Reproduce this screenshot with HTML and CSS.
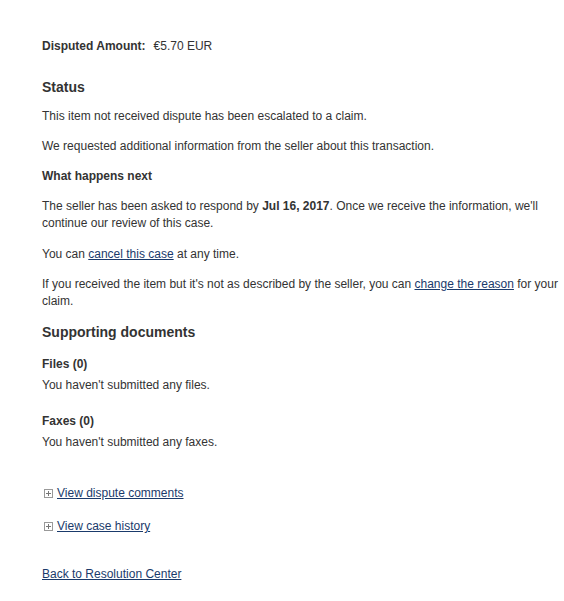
FILE: index.html
```html
<!DOCTYPE html>
<html lang="en">
<head>
    <meta charset="UTF-8">
    <meta name="viewport" content="width=device-width, initial-scale=1.0">
    <title>Case Details</title>
    <link rel="stylesheet" href="styles.css">
</head>
<body>
    <div class="case">
        <div class="amount">
            <span class="amount-label">Disputed Amount:</span>
            <span class="amount-value">&euro;5.70 EUR</span>
        </div>

        <section class="status">
            <h2>Status</h2>
            <p>This item not received dispute has been escalated to a claim.</p>
            <p>We requested additional information from the seller about this transaction.</p>
            <h3>What happens next</h3>
            <p class="respond">The seller has been asked to respond by <strong>Jul 16, 2017</strong>. Once we receive the information, we'll continue our review of this case.</p>
            <p>You can <a href="#">cancel this case</a> at any time.</p>
            <p>If you received the item but it's not as described by the seller, you can <a href="#">change the reason</a> for your claim.</p>
        </section>

        <section class="documents">
            <h2>Supporting documents</h2>
            <div class="doc-group">
                <h3>Files (0)</h3>
                <p>You haven't submitted any files.</p>
            </div>
            <div class="doc-group">
                <h3>Faxes (0)</h3>
                <p>You haven't submitted any faxes.</p>
            </div>
        </section>

        <div class="toggles">
            <div class="toggle"><span class="plus"></span><a href="#">View dispute comments</a></div>
            <div class="toggle"><span class="plus"></span><a href="#">View case history</a></div>
        </div>

        <div class="back">
            <a href="#">Back to Resolution Center</a>
        </div>
    </div>
</body>
</html>
```

FILE: styles.css
```css
body {
    font-family: "Liberation Sans", Arial, sans-serif;
    font-size: 12px;
    line-height: 17px;
    color: #333;
    background-color: #fff;
    margin: 0;
    padding: 38px 0 0 42px;
}

.case {
    width: 520px;
}

a {
    color: #1a3a6b;
    text-decoration: underline;
}

p {
    margin: 0 0 13px;
}

h2 {
    font-size: 14px;
    line-height: 20px;
    font-weight: bold;
    margin: 0;
}

h3 {
    font-size: 12px;
    line-height: 17px;
    font-weight: bold;
    margin: 0 0 13px;
}

.amount {
    display: flex;
    gap: 8px;
    margin-bottom: 22px;
}

.amount-label {
    font-weight: bold;
}

.status h2 {
    margin-bottom: 11px;
}

.status .respond {
    margin-bottom: 14px;
}

.status p:last-child {
    margin-bottom: 12px;
}

.documents h2 {
    margin-bottom: 14px;
}

.doc-group h3 {
    margin-bottom: 4px;
}

.doc-group p {
    margin: 0 0 19px;
}

.doc-group:last-child p {
    margin-bottom: 34px;
}

.toggle {
    display: flex;
    align-items: center;
    margin-bottom: 16px;
    padding-left: 2px;
}

.plus {
    position: relative;
    width: 7px;
    height: 7px;
    border: 1px solid #999;
    margin-right: 4px;
}

.plus::before,
.plus::after {
    content: "";
    position: absolute;
    background-color: #777;
}

.plus::before {
    left: 1px;
    top: 3px;
    width: 5px;
    height: 1px;
}

.plus::after {
    left: 3px;
    top: 1px;
    width: 1px;
    height: 5px;
}

.back {
    margin-top: 31px;
}
```
